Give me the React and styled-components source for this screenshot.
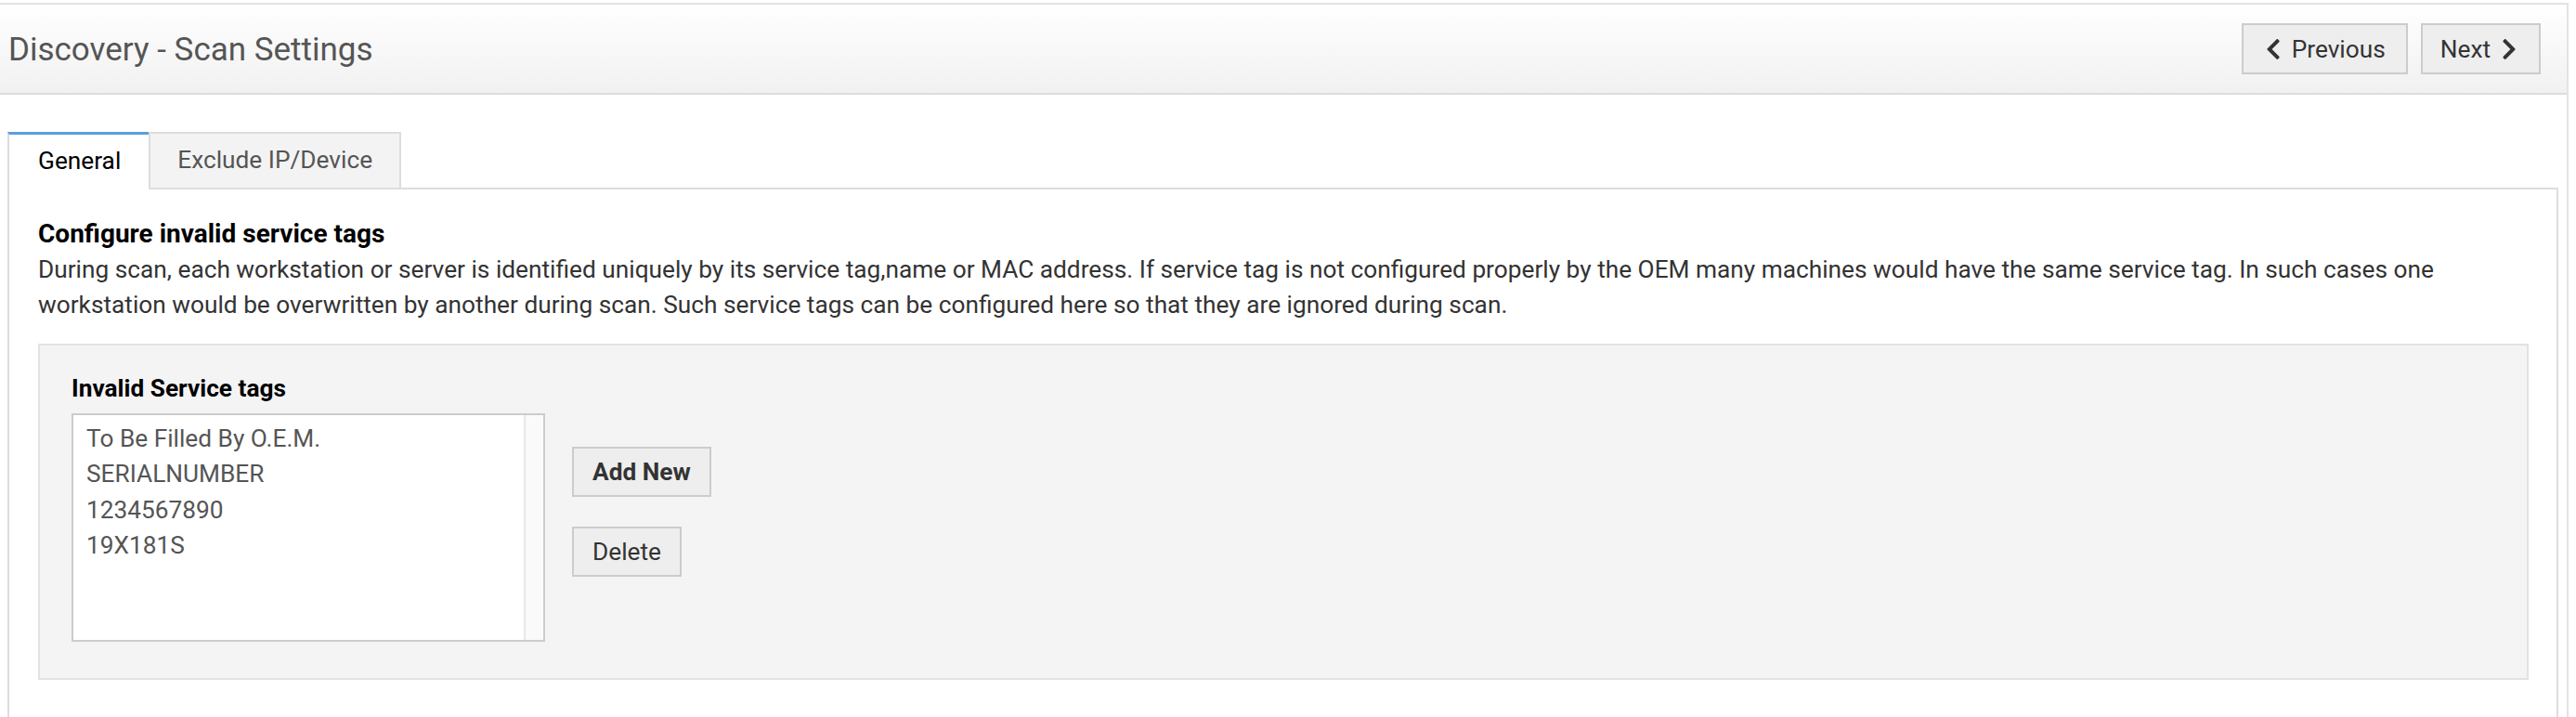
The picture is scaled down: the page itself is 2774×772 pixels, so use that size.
import React from "react";
import styled, { createGlobalStyle } from "styled-components";

const GlobalStyle = createGlobalStyle`
  * { box-sizing: border-box; }
  html, body { margin: 0; padding: 0; background: #fff; }
  body { font-family: Roboto, "Liberation Sans", Arial, sans-serif; font-size: 26.25px; color: #333; }
`;

const Page = styled.div`
  width: 2766px;
  margin-top: 3px;
  min-height: 769px;
  border-top: 2px solid #e3e3e3;
  border-right: 2px solid #e3e3e3;
`;

const Header = styled.header`
  height: 97px;
  display: flex;
  align-items: center;
  justify-content: space-between;
  padding: 0 28px 0 9px;
  background: linear-gradient(#ffffff, #f1f1f1);
  border-bottom: 2px solid #dddddd;
`;

const Title = styled.h1`
  margin: 2px 0 0;
  font-size: 35px;
  font-weight: 400;
  color: #555;
  line-height: normal;
`;

const NavGroup = styled.div`
  display: flex;
  gap: 14px;
`;

const NavButton = styled.button`
  display: flex;
  align-items: center;
  gap: 12px;
  height: 55px;
  padding: ${(p) => (p.$next ? "0 24px 0 19px" : "0 22px 0 24px")};
  font-family: inherit;
  font-size: 26.25px;
  color: #333;
  background: #eeeeee;
  border: 2px solid #cccccc;
  border-radius: 0;
  cursor: pointer;
`;

const Chevron = styled.svg`
  width: 16px;
  height: 26px;
  fill: #333;
  flex: none;
`;

const Content = styled.div`
  padding: 40px 9px 0 8px;
`;

const TabList = styled.div`
  display: flex;
  margin-bottom: -2px;
  position: relative;
  z-index: 1;
`;

const Tab = styled.div`
  height: ${(p) => (p.$active ? "62px" : "60px")};
  padding: ${(p) => (p.$active ? "13px 30px 0 31px" : "13px 29px 0 29px")};
  font-size: 26.25px;
  line-height: 31px;
  color: ${(p) => (p.$active ? "#000" : "#555")};
  background: ${(p) => (p.$active ? "#fff" : "#f3f3f3")};
  border-top: ${(p) => (p.$active ? "3px solid #5a9fdb" : "2px solid #dddddd")};
  border-left: 2px solid #dddddd;
  border-right: ${(p) => (p.$active ? "none" : "2px solid #dddddd")};
`;

const Panel = styled.div`
  border: 2px solid #dddddd;
  padding: 31px 30px 60px 31px;
`;

const Heading = styled.h2`
  margin: 0;
  font-size: 28px;
  font-weight: 700;
  color: #000;
  line-height: normal;
`;

const Description = styled.p`
  margin: 4px 0 0;
  font-size: 26.25px;
  line-height: 37.5px;
  color: #333;
`;

const FieldBox = styled.div`
  margin-top: 23px;
  background: #f4f4f4;
  border: 2px solid #e2e2e2;
  padding: 31px 34px 39px;
`;

const FieldLabel = styled.div`
  font-size: 26.25px;
  font-weight: 700;
  color: #000;
  line-height: normal;
  margin-bottom: 12px;
`;

const FieldRow = styled.div`
  display: flex;
  align-items: flex-start;
  gap: 29px;
`;

const ListBox = styled.div`
  width: 510px;
  height: 246px;
  display: flex;
  background: #fff;
  border: 2px solid #cccccc;
`;

const ListItems = styled.ul`
  flex: 1;
  margin: 0;
  padding: 6px 0 0 14px;
  list-style: none;
`;

const ListItem = styled.li`
  font-size: 26.25px;
  line-height: 38.3px;
  color: #555;
`;

const ScrollTrack = styled.div`
  width: 21px;
  background: #fafafa;
  border-left: 2px solid #e8e8e8;
`;

const ActionColumn = styled.div`
  display: flex;
  flex-direction: column;
  align-items: flex-start;
  gap: 32px;
  margin-top: 36px;
`;

const ActionButton = styled.button`
  height: 54px;
  padding: 0 20px;
  font-family: inherit;
  font-size: 26.25px;
  font-weight: ${(p) => (p.$bold ? 700 : 400)};
  color: #333;
  background: #eeeeee;
  border: 2px solid #cccccc;
  border-radius: 0;
  cursor: pointer;
`;

const tags = ["To Be Filled By O.E.M.", "SERIALNUMBER", "1234567890", "19X181S"];

export default function App() {
  return (
    <>
      <GlobalStyle />
      <Page>
        <Header>
          <Title>Discovery - Scan Settings</Title>
          <NavGroup>
            <NavButton type="button">
              <Chevron viewBox="0 0 320 512" aria-hidden="true">
                <path d="M34.52 239.03L228.87 44.69c9.37-9.37 24.57-9.37 33.94 0l22.67 22.67c9.36 9.36 9.37 24.52.04 33.9L131.49 256l154.02 154.75c9.34 9.38 9.32 24.54-.04 33.9l-22.67 22.67c-9.37 9.37-24.57 9.37-33.94 0L34.52 272.97c-9.37-9.37-9.37-24.57 0-33.94z" />
              </Chevron>
              Previous
            </NavButton>
            <NavButton type="button" $next>
              Next
              <Chevron viewBox="0 0 320 512" aria-hidden="true">
                <path d="M285.476 272.971L91.132 467.314c-9.373 9.373-24.569 9.373-33.941 0l-22.667-22.667c-9.357-9.357-9.375-24.522-.04-33.901L188.505 256 34.484 101.255c-9.335-9.379-9.317-24.544.04-33.901l22.667-22.667c9.373-9.373 24.569-9.373 33.941 0L285.475 239.03c9.373 9.372 9.373 24.568.001 33.941z" />
              </Chevron>
            </NavButton>
          </NavGroup>
        </Header>
        <Content>
          <TabList>
            <Tab $active>General</Tab>
            <Tab>Exclude IP/Device</Tab>
          </TabList>
          <Panel>
            <Heading>Configure invalid service tags</Heading>
            <Description>
              During scan, each workstation or server is identified uniquely by its service tag,name or MAC address. If service tag is not configured properly by the OEM many machines would have the same service tag. In such cases one
              <br />
              workstation would be overwritten by another during scan. Such service tags can be configured here so that they are ignored during scan.
            </Description>
            <FieldBox>
              <FieldLabel>Invalid Service tags</FieldLabel>
              <FieldRow>
                <ListBox>
                  <ListItems>
                    {tags.map((t) => (
                      <ListItem key={t}>{t}</ListItem>
                    ))}
                  </ListItems>
                  <ScrollTrack />
                </ListBox>
                <ActionColumn>
                  <ActionButton type="button" $bold>Add New</ActionButton>
                  <ActionButton type="button">Delete</ActionButton>
                </ActionColumn>
              </FieldRow>
            </FieldBox>
          </Panel>
        </Content>
      </Page>
    </>
  );
}
